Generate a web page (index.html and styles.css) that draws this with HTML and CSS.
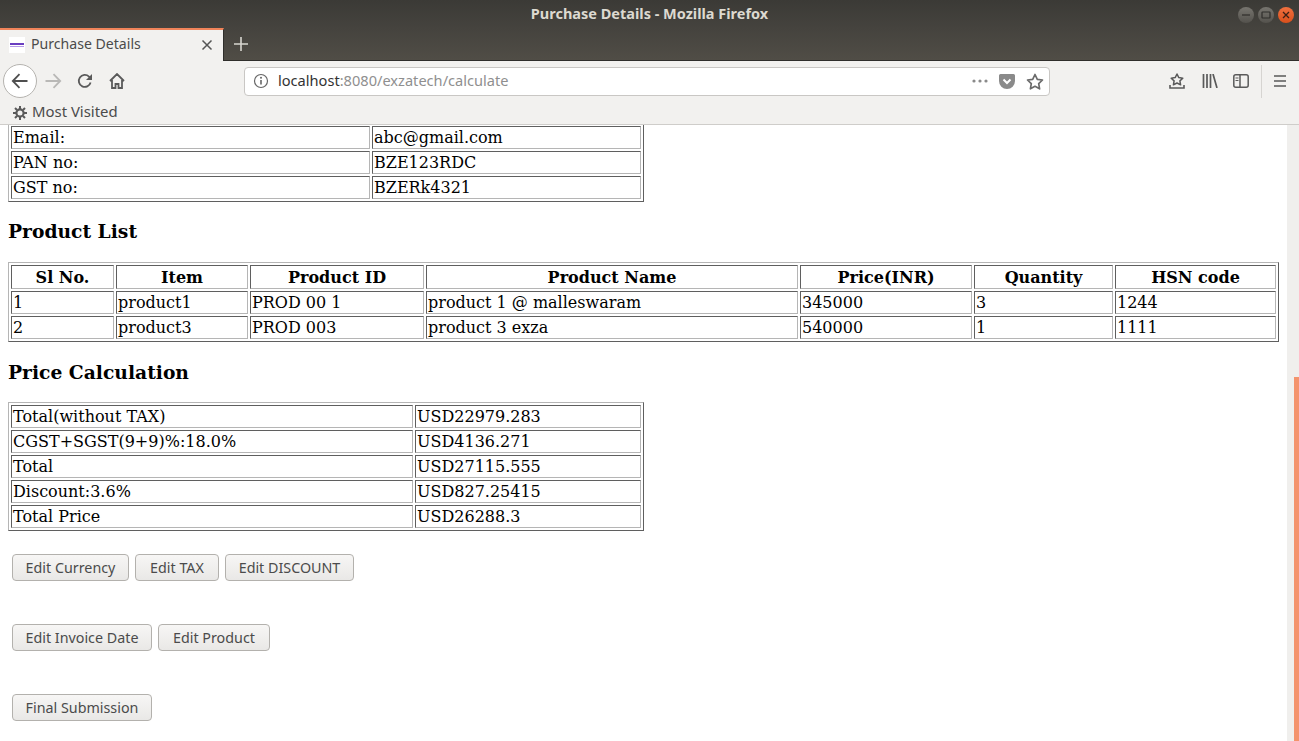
FILE: index.html
```html
<!DOCTYPE html>
<html lang="en">
<head>
    <meta charset="UTF-8">
    <meta name="viewport" content="width=device-width, initial-scale=1.0">
    <title>Purchase Details - Mozilla Firefox</title>
    <link rel="stylesheet" href="styles.css">
</head>
<body>
    <header class="browser">
        <div class="titlebar">
            <span></span>
            <span class="window-title">Purchase Details - Mozilla Firefox</span>
            <div class="window-controls">
                <span class="win-btn"><svg width="16" height="16" viewBox="0 0 16 16"><path d="M4 8h8" stroke="#2f2e2b" stroke-width="1.2"/></svg></span>
                <span class="win-btn"><svg width="16" height="16" viewBox="0 0 16 16"><rect x="4" y="5" width="8" height="6" rx="0.5" fill="none" stroke="#2f2e2b" stroke-width="1.2"/></svg></span>
                <span class="win-btn win-close"><svg width="16" height="16" viewBox="0 0 16 16"><path d="M5 5l6 6M11 5l-6 6" stroke="#3a2016" stroke-width="1.3"/></svg></span>
            </div>
        </div>
        <div class="tabstrip">
            <div class="tab">
                <span class="favicon"><i></i><i></i></span>
                <span class="tab-label">Purchase Details</span>
                <svg class="tab-close" width="12" height="12" viewBox="0 0 12 12"><path d="M1.5 1.5l9 9M10.5 1.5l-9 9" stroke="#555" stroke-width="1.5"/></svg>
            </div>
            <svg class="new-tab" width="14" height="14" viewBox="0 0 14 14"><path d="M7 0v14M0 7h14" stroke="#d8d6d0" stroke-width="1.6"/></svg>
        </div>
        <div class="toolbar">
            <span class="back-btn">
                <svg width="18" height="18" viewBox="0 0 18 18"><path d="M16.5 9H2M8.5 2.2L1.8 9l6.7 6.8" fill="none" stroke="#4f4f4f" stroke-width="1.8"/></svg>
            </span>
            <span class="tool-btn">
                <svg width="18" height="18" viewBox="0 0 18 18"><path d="M1.5 9H16M9.5 2.2L16.2 9l-6.7 6.8" fill="none" stroke="#b9b8b6" stroke-width="1.8"/></svg>
            </span>
            <span class="tool-btn">
                <svg width="16" height="16" viewBox="0 0 16 16"><path d="M13.6 9.5A6 6 0 1 1 12 3.6L14.4 6" fill="none" stroke="#5a5a5a" stroke-width="1.8"/><path d="M15 1v6H9z" fill="#5a5a5a"/></svg>
            </span>
            <span class="tool-btn">
                <svg width="16" height="16" viewBox="0 0 16 16"><path d="M1 8l7-7 7 7M3 7v8h3.5v-4h3v4H13V7" fill="none" stroke="#5a5a5a" stroke-width="1.8"/></svg>
            </span>
            <div class="urlbar">
                <svg class="url-info" width="16" height="16" viewBox="0 0 16 16"><circle cx="8" cy="8" r="6.5" fill="none" stroke="#666" stroke-width="1.2"/><path d="M8 7v4.5" stroke="#666" stroke-width="1.6"/><circle cx="8" cy="4.8" r="1" fill="#666"/></svg>
                <span class="url-text"><b>localhost</b>:8080/exzatech/calculate</span>
                <svg class="url-dots" width="16" height="4" viewBox="0 0 16 4"><circle cx="2" cy="2" r="1.6"/><circle cx="8" cy="2" r="1.6"/><circle cx="14" cy="2" r="1.6"/></svg>
                <svg width="16" height="15" viewBox="0 0 16 15"><path d="M1.5 0h13A1.5 1.5 0 0 1 16 1.5V7A8 8 0 0 1 0 7V1.5A1.5 1.5 0 0 1 1.5 0z" fill="#8a8a8a"/><path d="M4.5 5.5L8 9l3.5-3.5" fill="none" stroke="#fff" stroke-width="2"/></svg>
                <svg width="18" height="17" viewBox="0 0 18 17"><path d="M9 1.5l2.3 4.8 5.2.7-3.8 3.6.9 5.2L9 13.3l-4.6 2.5.9-5.2L1.5 7l5.2-.7z" fill="none" stroke="#6b6b6b" stroke-width="1.7" stroke-linejoin="round"/></svg>
            </div>
            <div class="toolbar-right">
                <svg width="16" height="16" viewBox="0 0 16 16"><path d="M8 1l1.8 3.6 4 .6-2.9 2.7.7 3.9L8 10l-3.6 1.8.7-3.9L2.200 5.200l4-.6z" fill="none" stroke="#5a5a5a" stroke-width="1.5" stroke-linejoin="round"/><path d="M1 12v3h14v-3" fill="none" stroke="#5a5a5a" stroke-width="1.6"/></svg>
                <svg class="tb-library" width="16" height="14" viewBox="0 0 16 14"><path d="M1.500 0v14M5 0v14M8.500 0v14M11 0l4 14" fill="none" stroke="#5a5a5a" stroke-width="1.7"/></svg>
                <svg class="tb-sidebar" width="16" height="14" viewBox="0 0 16 14"><rect x="0.800" y="0.800" width="14.400" height="12.400" rx="2" fill="none" stroke="#5a5a5a" stroke-width="1.500"/><path d="M7 1v12" stroke="#5a5a5a" stroke-width="1.500"/><path d="M2.500 4h3M2.500 6.500h3" stroke="#5a5a5a" stroke-width="1.200"/></svg>
                <span class="toolbar-sep"></span>
                <svg class="tb-menu" width="12" height="12" viewBox="0 0 12 12"><path d="M0 1h12M0 6h12M0 11h12" stroke="#5a5a5a" stroke-width="1.600"/></svg>
            </div>
        </div>
        <div class="bookmarks">
            <svg width="14" height="14" viewBox="0 0 14 14"><circle cx="7" cy="7" r="3.600" fill="none" stroke="#5a5a5a" stroke-width="2.200"/><path d="M7 0v3M7 11v3M0 7h3M11 7h3M2 2l2 2M10 10l2 2M12 2l-2 2M4 10l-2 2" stroke="#5a5a5a" stroke-width="2"/></svg>
            <span class="bookmark-label">Most Visited</span>
        </div>
    </header>

    <div class="viewport">
        <main class="page">
            <table class="data-table top-table">
                <colgroup><col class="col-contact-a"><col></colgroup>
                <tr><td>Email:</td><td>abc@gmail.com</td></tr>
                <tr><td>PAN no:</td><td>BZE123RDC</td></tr>
                <tr><td>GST no:</td><td>BZERk4321</td></tr>
            </table>

            <h3 class="section-title">Product List</h3>
            <table class="data-table product-table">
                <colgroup>
                    <col class="col-sl"><col class="col-item"><col class="col-id"><col class="col-name">
                    <col class="col-price"><col class="col-qty"><col>
                </colgroup>
                <tr>
                    <th>Sl No.</th><th>Item</th><th>Product ID</th><th>Product Name</th>
                    <th>Price(INR)</th><th>Quantity</th><th>HSN code</th>
                </tr>
                <tr>
                    <td>1</td><td>product1</td><td>PROD 00 1</td><td>product 1 @ malleswaram</td>
                    <td>345000</td><td>3</td><td>1244</td>
                </tr>
                <tr>
                    <td>2</td><td>product3</td><td>PROD 003</td><td>product 3 exza</td>
                    <td>540000</td><td>1</td><td>1111</td>
                </tr>
            </table>

            <h3 class="section-title section-title-low">Price Calculation</h3>
            <table class="data-table price-table">
                <colgroup><col class="col-price-a"><col></colgroup>
                <tr><td>Total(without TAX)</td><td>USD22979.283</td></tr>
                <tr><td>CGST+SGST(9+9)%:18.0%</td><td>USD4136.271</td></tr>
                <tr><td>Total</td><td>USD27115.555</td></tr>
                <tr><td>Discount:3.6%</td><td>USD827.25415</td></tr>
                <tr><td>Total Price</td><td>USD26288.3</td></tr>
            </table>

            <div class="actions">
                <div class="action-row">
                    <button class="btn w-currency">Edit Currency</button>
                    <button class="btn w-tax">Edit TAX</button>
                    <button class="btn w-discount">Edit DISCOUNT</button>
                </div>
                <div class="action-row">
                    <button class="btn w-date">Edit Invoice Date</button>
                    <button class="btn w-product">Edit Product</button>
                </div>
                <div class="action-row">
                    <button class="btn w-date">Final Submission</button>
                </div>
            </div>
        </main>
        <div class="scrollbar"><div class="scroll-thumb"></div></div>
    </div>
</body>
</html>
```

FILE: styles.css
```css
html, body {
    margin: 0;
    height: 741px;
    overflow: hidden;
}
body {
    display: flex;
    flex-direction: column;
    background-color: #fff;
    font-family: "DejaVu Serif", serif;
    font-size: 16px;
    color: #000;
}

/* browser chrome */
.browser {
    flex: none;
    height: 125px;
    box-sizing: border-box;
    border-bottom: 1px solid #cfcdca;
    background-color: #f2f1ef;
    font-family: "Noto Sans", sans-serif;
}
.titlebar {
    height: 28px;
    display: grid;
    grid-template-columns: 1fr auto 1fr;
    align-items: center;
    background: linear-gradient(#3b3a36, #45433e);
}
.window-title {
    color: #dcd9d0;
    font-size: 14.5px;
    font-weight: 700;
    padding-bottom: 3px;
}
.window-controls {
    display: flex;
    justify-content: flex-end;
    gap: 4px;
    padding: 1px 5px 0 0;
}
.win-btn {
    width: 16px;
    height: 16px;
    border-radius: 50%;
    background: linear-gradient(#77756f, #54524d);
    display: flex;
}
.win-close {
    background: linear-gradient(#f0703f, #d9501c);
}
.tabstrip {
    height: 33px;
    box-sizing: border-box;
    display: flex;
    align-items: center;
    background: linear-gradient(#45433e, #504d46);
    border-bottom: 1px solid #2f2e2b;
}
.tab {
    width: 224px;
    height: 33px;
    box-sizing: border-box;
    display: flex;
    align-items: center;
    padding: 0 10px 0 9px;
    background-color: #f2f1ef;
    border-top: 2px solid #f0845a;
    border-right: 1px solid #2f2e2b;
}
.favicon {
    width: 16px;
    height: 16px;
    box-sizing: border-box;
    padding: 0 1px;
    background-color: #fff;
    display: flex;
    flex-direction: column;
    justify-content: center;
    gap: 1px;
    margin-right: 6px;
}
.favicon i {
    height: 2px;
    background-color: #6a3ec0;
}
.favicon i + i {
    height: 1px;
    background-color: #b79be8;
}
.tab-label {
    flex: 1;
    font-size: 14.1px;
    color: #4b4b4b;
    padding-bottom: 4px;
}
.new-tab {
    margin-left: 10px;
}
.toolbar {
    height: 40px;
    display: flex;
    align-items: center;
    padding: 0 0 0 3px;
}
.back-btn {
    width: 32px;
    height: 32px;
    border: 1px solid #b5b3af;
    border-radius: 50%;
    background-color: #fff;
    display: flex;
    align-items: center;
    justify-content: center;
}
.tool-btn {
    width: 32px;
    display: flex;
    justify-content: center;
}
.urlbar {
    width: 806px;
    height: 29px;
    margin-left: 111px;
    box-sizing: border-box;
    border: 1px solid #c9c7c4;
    border-radius: 4px;
    background-color: #fff;
    display: flex;
    align-items: center;
    gap: 11px;
    padding: 0 5px 0 8px;
}
.url-info {
    margin-right: -2px;
}
.url-text {
    flex: 1;
    font-size: 14.6px;
    color: #8f8f8f;
    padding-bottom: 2px;
}
.url-text b {
    font-weight: 400;
    color: #333;
}
.url-dots {
    fill: #8a8a8a;
}
.toolbar-right {
    flex: 1;
    display: flex;
    align-items: center;
    justify-content: flex-end;
    padding-right: 13px;
}
.tb-library { margin-left: 17px; }
.tb-sidebar { margin-left: 15px; }
.tb-menu { margin-left: 12px; }
.toolbar-sep {
    width: 1px;
    height: 33px;
    margin-left: 12px;
    background-color: #d6d4d1;
}
.bookmarks {
    height: 23px;
    display: flex;
    align-items: center;
    gap: 5px;
    padding: 0 0 0 13px;
    font-size: 14.9px;
    color: #4b4b4b;
}
.bookmark-label {
    padding-bottom: 3px;
}

/* scrolled page area */
.viewport {
    flex: 1;
    min-height: 0;
    display: flex;
}
.page {
    flex: 1;
    overflow: hidden;
    padding: 0 8px;
}
.scrollbar {
    flex: none;
    width: 12px;
    box-sizing: border-box;
    background-color: #f0efed;
    display: flex;
    flex-direction: column;
    align-items: flex-end;
    padding-top: 252px;
}
.scroll-thumb {
    width: 5px;
    flex: 1;
    background-color: #f4936c;
}

.section-title {
    margin: 19px 0 20px;
    line-height: 21px;
    font-size: 18.72px;
}
.section-title-low {
    margin: 20px 0 19px;
}
.data-table {
    table-layout: fixed;
    border-spacing: 2px;
    border: 1px solid;
    border-color: #b5b5b5 #5f5f5f #5f5f5f #b5b5b5;
}
.data-table td, .data-table th {
    padding: 1px;
    line-height: 19px;
    white-space: nowrap;
    overflow: hidden;
    border: 1px solid;
    border-color: #5f5f5f #b5b5b5 #b5b5b5 #5f5f5f;
}
.data-table th {
    padding-top: 2px;
}
.top-table {
    width: 636px;
    border-top: 0;
    margin-top: -1px;
}
.col-contact-a { width: 359px; }
.product-table {
    width: 1271px;
}
.col-sl { width: 103px; }
.col-item { width: 132px; }
.col-id { width: 174px; }
.col-name { width: 372px; }
.col-price { width: 172px; }
.col-qty { width: 139px; }
.price-table {
    width: 636px;
}
.col-price-a { width: 402px; }

/* buttons */
.actions {
    padding: 23px 0 0 4px;
    display: flex;
    flex-direction: column;
    gap: 43px;
}
.action-row {
    display: flex;
    gap: 6px;
}
.btn {
    height: 27px;
    box-sizing: border-box;
    padding: 0;
    border: 1px solid #b3b1ad;
    border-radius: 4px;
    background: linear-gradient(#f7f6f5, #e9e8e6);
    color: #4b4b4b;
    font-family: "Noto Sans", sans-serif;
    font-size: 14.3px;
}
.w-currency { width: 117px; }
.w-tax { width: 84px; }
.w-discount { width: 129px; }
.w-date { width: 140px; }
.w-product { width: 112px; }
```
